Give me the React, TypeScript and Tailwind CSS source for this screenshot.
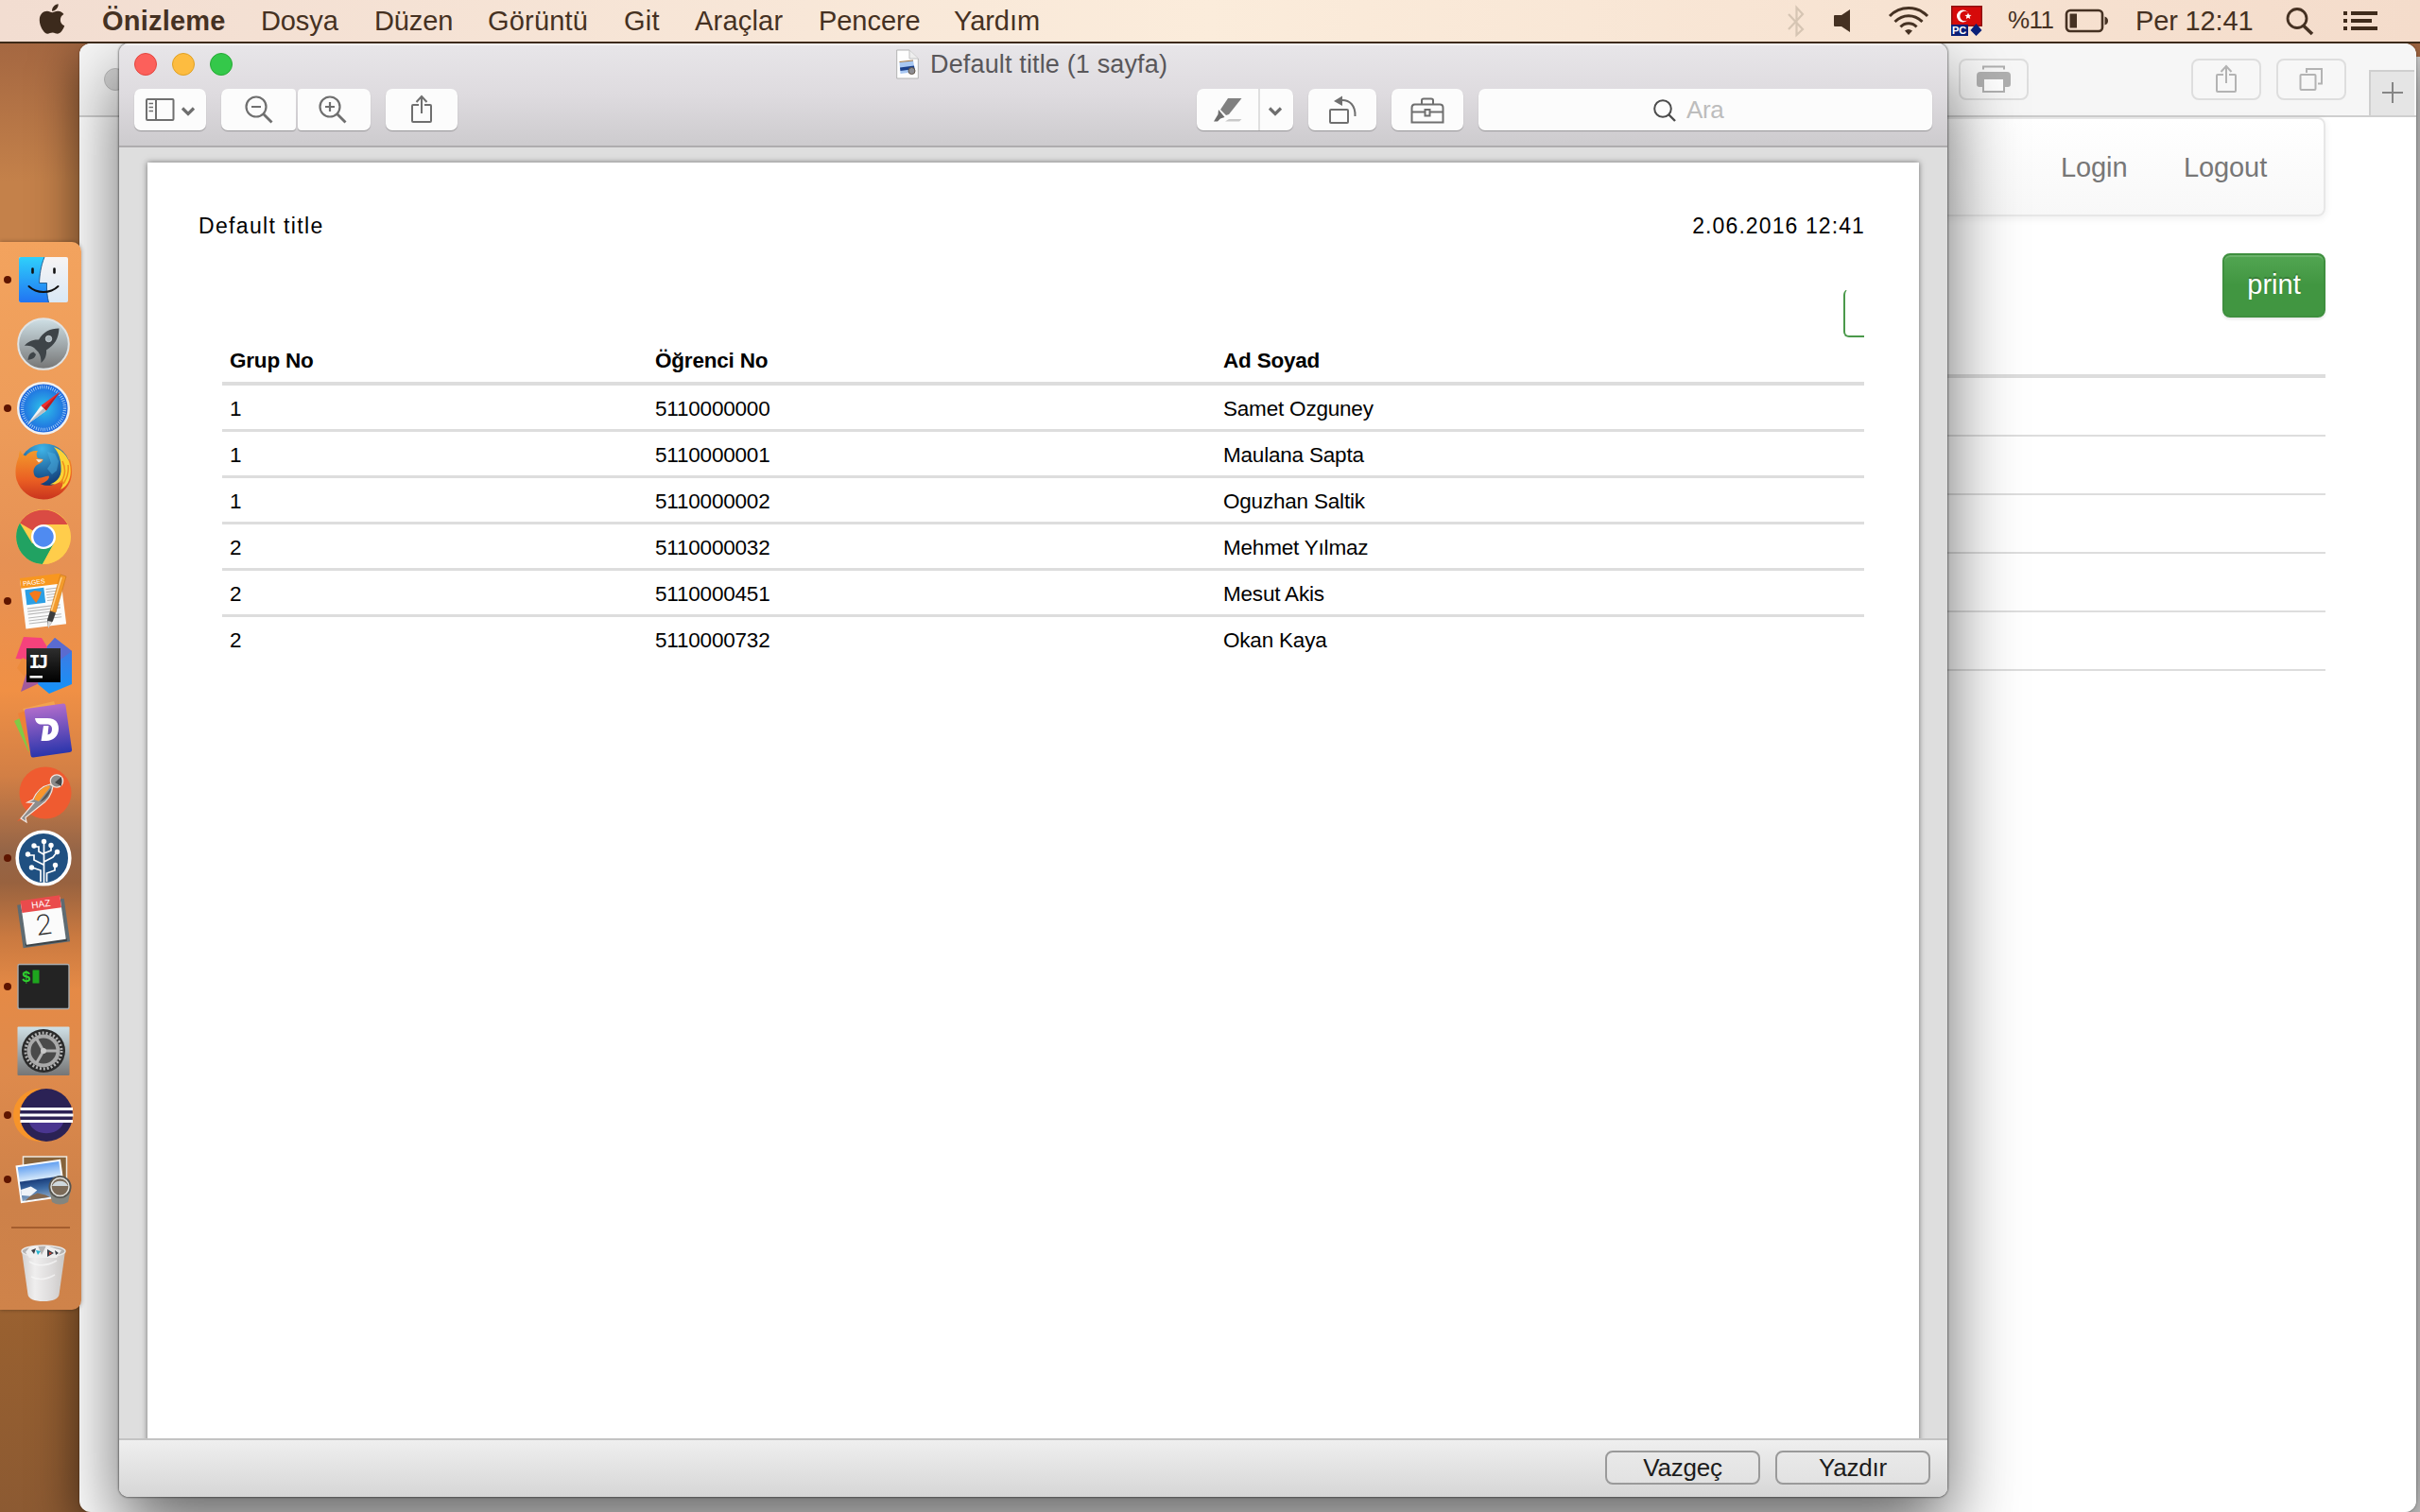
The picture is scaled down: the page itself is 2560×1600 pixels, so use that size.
import type { ReactNode } from "react";
import { FaApple } from "react-icons/fa";

const students = [
  ["1", "5110000000", "Samet Ozguney"],
  ["1", "5110000001", "Maulana Sapta"],
  ["1", "5110000002", "Oguzhan Saltik"],
  ["2", "5110000032", "Mehmet Yılmaz"],
  ["2", "5110000451", "Mesut Akis"],
  ["2", "5110000732", "Okan Kaya"],
];

const menus = [
  { label: "Önizleme", cls: "w-[168px] font-bold tracking-[0.2px]" },
  { label: "Dosya", cls: "w-[120px] tracking-[-0.1px]" },
  { label: "Düzen", cls: "w-[120px] tracking-[-0.1px]" },
  { label: "Görüntü", cls: "w-[144px] tracking-[0.2px]" },
  { label: "Git", cls: "w-[75px] tracking-[0.3px]" },
  { label: "Araçlar", cls: "w-[131px] tracking-[0.2px]" },
  { label: "Pencere", cls: "w-[143px] tracking-[-0.05px]" },
  { label: "Yardım", cls: "w-[110px] tracking-[-0.05px]" },
];

function MenuBar() {
  return (
    <header className="relative flex h-[46px] items-start border-b-2 border-[#3d2a18] bg-linear-to-r from-[#f2ddd1] via-[#fbecdb] to-[#f4dccb] text-[29px] leading-[44px] text-[#453122]">
      <FaApple className="ml-[38px] mt-[2px] h-[36px] w-[34px] shrink-0 text-[#3c2a1c]" />
      <nav className="ml-[36px] flex w-[1781px] shrink-0 whitespace-nowrap">
        {menus.map((m) => (
          <span key={m.label} className={"shrink-0 " + m.cls}>{m.label}</span>
        ))}
      </nav>
      <svg className="-ml-[4px] mt-[5px] h-[36px] w-[30px] shrink-0" viewBox="0 0 30 36" fill="none" stroke="#d6c5b3" strokeWidth="2.2">
        <path d="M7 10 L22 26 L15.5 32 V3 L22 10 L7 26" />
      </svg>
      <svg className="ml-[24px] mt-[9px] h-[26px] w-[22px] shrink-0" viewBox="0 0 22 26" fill="#453122">
        <path d="M2 7 h7 L18 1 V25 L9 19 H2 Q1 19 1 18 V8 Q1 7 2 7Z" />
      </svg>
      <svg className="ml-[35px] mt-[5px] h-[34px] w-[46px] shrink-0" viewBox="0 0 46 34" fill="none" stroke="#453122" strokeWidth="3">
        <path d="M3 12 C14 .7 32 .7 43 12" />
        <path d="M8.500 18 C17 9.500 29 9.500 37.500 18" />
        <path d="M14.500 23.500 C19 18.500 27 18.500 31.500 23.500" />
        <path d="M19 27.500 Q23 24.500 27 27.500 L23 32Z" fill="#453122" stroke="none" />
      </svg>
      <svg className="ml-[22px] mt-[6px] h-[32px] w-[33px] shrink-0" viewBox="0 0 33 32">
        <rect width="33" height="22" fill="#d60a0a" />
        <rect x=".75" y=".75" width="31.500" height="20.500" fill="none" stroke="#8f1010" strokeWidth="1.500" />
        <circle cx="12.500" cy="11" r="6.500" fill="#fff" />
        <circle cx="14.500" cy="11" r="5.200" fill="#d60a0a" />
        <path d="M18 7.500 l1 2.200 2.500 .2 -1.900 1.600 .6 2.500 -2.200 -1.300 -2.200 1.300 .6 -2.500 -1.900 -1.600 2.500 -.2z" fill="#fff" />
        <rect y="20" width="18" height="12" fill="#0a1f78" />
        <text x="1" y="30" fill="#fff" fontSize="11" fontWeight="700" fontFamily="Liberation Sans, sans-serif">PC</text>
        <path d="M26.500 19 l6 7 -6 6 -6 -6z" fill="#0a1f78" />
      </svg>
      <span className="ml-[27px] w-[60px] shrink-0 whitespace-nowrap text-[26px] leading-[43px] tracking-[-0.6px]">%11</span>
      <svg className="mt-[9px] h-[26px] w-[48px] shrink-0" viewBox="0 0 48 26">
        <rect x="2" y="2" width="38" height="22" rx="4" fill="none" stroke="#453122" strokeWidth="2.600" />
        <rect x="5.500" y="5.500" width="7.500" height="15" fill="#453122" />
        <path d="M42.500 8.500 Q46 9.500 46 13 Q46 16.500 42.500 17.500Z" fill="#453122" />
      </svg>
      <span className="ml-[27px] w-[158px] shrink-0 whitespace-nowrap tracking-[-0.15px]">Per 12:41</span>
      <svg className="mt-[7px] h-[32px] w-[32px] shrink-0" viewBox="0 0 32 32" fill="none" stroke="#453122" strokeWidth="2.800">
        <circle cx="13" cy="12.500" r="10" />
        <path d="M19.500 20 L29 29" strokeWidth="3.600" />
      </svg>
      <svg className="ml-[29px] mt-[12px] h-[20px] w-[38px] shrink-0" viewBox="0 0 38 20" fill="#3f2b1b">
        <path d="M1 0h4v4h-4zM1 8h4v4h-4zM1 16h4v4h-4zM9 0h28v4h-28zM9 8h22v4h-22zM9 16h28v4h-28z" />
      </svg>
    </header>
  );
}

function ShareIcon({ cls }: { cls: string }) {
  return (
    <svg className={"h-[32px] w-[24px] " + cls} viewBox="0 0 24 32" fill="none" stroke="currentColor" strokeWidth="2">
      <path d="M9 11 H3 Q2 11 2 12 V28 Q2 29 3 29 H21 Q22 29 22 28 V12 Q22 11 21 11 H15" />
      <path d="M12 20 V2 M6.500 8 L12 2 L17.500 8" />
    </svg>
  );
}

function SafariWindow() {
  const btn = "flex h-[44px] items-center justify-center rounded-[8px] border-2 border-[#dedede] bg-[#f7f7f7]";
  return (
    <section className="absolute left-[84px] top-[46px] h-[1554px] w-[2472px] overflow-hidden rounded-[12px] bg-white">
      <div className="flex h-[78px] items-start border-b-2 border-[#cfcfcf] bg-[#f6f6f6]">
        <div className="ml-[26px] mt-[26px] h-[24px] w-[24px] rounded-full border border-[#bbb] bg-[#d4d4d4]" />
        <div className={"ml-[1938px] mt-[16px] w-[74px] " + btn}>
          <svg className="h-[30px] w-[36px]" viewBox="0 0 36 30">
            <path d="M7 4.500 V1.500 H29 V4.500" fill="none" stroke="#b0b0b0" strokeWidth="2" />
            <path d="M4 7 H32 Q36 7 36 11 V20 Q36 23 33 23 H30 V15 H6 V23 H3 Q0 23 0 20 V11 Q0 7 4 7Z" fill="#b0b0b0" />
            <path d="M7 15 V28 H29 V15" fill="#fff" stroke="#b0b0b0" strokeWidth="2" />
          </svg>
        </div>
        <div className={"ml-[172px] mt-[16px] w-[74px] " + btn}><ShareIcon cls="text-[#b3b3b3]" /></div>
        <div className={"ml-[16px] mt-[16px] w-[74px] " + btn}>
          <svg className="h-[26px] w-[26px]" viewBox="0 0 26 26" fill="none" stroke="#b3b3b3" strokeWidth="2">
            <rect x="1.500" y="8" width="16" height="16" rx="1" />
            <path d="M8 6 V2 H24 V17.500 H20" />
          </svg>
        </div>
        <div className="ml-[24px] mt-[28px] flex h-[48px] w-[48px] items-center justify-center border-l-2 border-t-2 border-[#cfcfcf] bg-[#e5e5e5] pb-[2px]">
          <svg className="h-[22px] w-[22px]" viewBox="0 0 22 22" stroke="#858585" strokeWidth="2"><path d="M11 0V22M0 11H22" /></svg>
        </div>
      </div>
      <div className="ml-[96px] flex w-[2280px] flex-col items-end">
        <div className="flex h-[105px] w-full items-center rounded-[8px] border-2 border-[#e7e7e7] bg-linear-to-b from-white to-[#f8f8f8] pl-[1998px] text-[29px] leading-[32px] tracking-[-0.1px] text-[#777] shadow-[0_2px_8px_rgba(0,0,0,0.07)]">
          <span className="w-[130px]">Login</span>
          <span>Logout</span>
        </div>
        <div className="mt-[39px] flex h-[68px] w-[109px] items-center justify-center rounded-[8px] border-2 border-[#3e8f3e] bg-linear-to-b from-[#52a652] to-[#419641] to-50% text-[29px] tracking-[0px] text-white shadow-[inset_0_2px_0_rgba(255,255,255,0.15),0_2px_3px_rgba(0,0,0,0.1)] [text-shadow:0_-2px_1px_rgba(0,0,0,0.2)]">print</div>
        <div className="mt-[60px] h-[4px] w-full bg-[#ddd]" />
        {[0, 1, 2, 3, 4].map((i) => (
          <div key={i} className="h-[62px] w-full border-b-2 border-[#ddd]" />
        ))}
      </div>
    </section>
  );
}

const tool = "flex h-[44px] shrink-0 items-center bg-[#fcfcfc] text-[#6f6f6f] shadow-[0_1px_1px_rgba(0,0,0,0.28)]";

function Zoomer({ plus }: { plus?: boolean }) {
  return (
    <svg className="h-[30px] w-[30px]" viewBox="0 0 30 30" fill="none" stroke="currentColor" strokeWidth="2.200">
      <circle cx="12" cy="12" r="10.500" />
      <path d={plus ? "M7 12H17M12 7V17" : "M7 12H17"} />
      <path d="M19.500 19.500 L28.500 28.500" strokeWidth="2.800" />
    </svg>
  );
}

function Chevron({ cls }: { cls: string }) {
  return (
    <svg className={"h-[10px] w-[16px] " + cls} viewBox="0 0 16 10" fill="none" stroke="currentColor" strokeWidth="3.200">
      <path d="M2 1.500 L8 7.500 L14 1.500" />
    </svg>
  );
}

function PreviewToolbar() {
  return (
    <div className="h-[110px] border-b-2 border-[#aeacae] bg-linear-to-b from-[#e8e6e9] via-[#dedbdf] to-[#cdcbce] shadow-[inset_0_2px_0_#f3f2f4]">
      <div className="flex h-[44px] items-center pl-[16px]">
        <div className="flex gap-[16px]">
          <i className="h-[24px] w-[24px] rounded-full border border-[#e2463f] bg-[#fc605b]" />
          <i className="h-[24px] w-[24px] rounded-full border border-[#dfa023] bg-[#fdbc40]" />
          <i className="h-[24px] w-[24px] rounded-full border border-[#27aa35] bg-[#34c84a]" />
        </div>
        <svg className="ml-[702px] h-[32px] w-[24px]" viewBox="0 0 24 32">
          <path d="M.7 1 H14 L23.300 10 V31 H.7Z" fill="#fefefe" stroke="#b2b2b2" />
          <path d="M14 1 V10 H23.300" fill="#eee" stroke="#c0c0c0" />
          <path d="M3.500 14 L18 12 L20 24 L4.500 26Z" fill="#a9c8f2" />
          <path d="M4 19.500 L19 17.500 L19.500 21 L4.500 23Z" fill="#1c418c" />
          <path d="M3.500 13.500 L18 12" stroke="#a2743c" />
          <circle cx="16.500" cy="23" r="3.500" fill="#8d8d92" stroke="#605548" />
        </svg>
        <span className="ml-[12px] whitespace-nowrap text-[27px] leading-[46px] tracking-[0.15px] text-[#59575a]">Default title (1 sayfa)</span>
      </div>
      <div className="mt-[4px] flex pl-[16px]">
        <div className={"w-[76px] rounded-[7px] pl-[12px] " + tool}>
          <svg className="h-[24px] w-[31px]" viewBox="0 0 31 24" fill="none" stroke="currentColor" strokeWidth="2">
            <rect x="1" y="1" width="28.500" height="22" rx="1" />
            <path d="M11 1V23" />
            <path d="M3.500 5.500H8M3.500 9.500H8M3.500 13.500H8" strokeWidth="1.600" />
          </svg>
          <Chevron cls="ml-[6px] mt-[3px]" />
        </div>
        <div className={"ml-[16px] w-[79px] justify-center rounded-l-[7px] rounded-r-[4px] " + tool}><Zoomer /></div>
        <div className={"ml-[2px] w-[77px] rounded-l-[4px] rounded-r-[7px] pl-[22px] " + tool}><Zoomer plus /></div>
        <div className={"ml-[16px] w-[76px] justify-center rounded-[7px] " + tool}><ShareIcon cls="" /></div>
        <div className={"ml-[782px] w-[102px] rounded-[7px] pl-[18px] " + tool}>
          <svg className="h-[26px] w-[31px]" viewBox="0 0 31 26">
            <path d="M15 1 H29.500 L16 18 L13 19 L7 13Z" fill="#808080" />
            <path d="M5 13 L11.500 21 L7 22.500 L4 25.500 H0 L4.500 18Z" fill="#6c6c6c" />
            <path d="M12 25.500 L16 23 H29.500 L27 25.500Z" fill="#c9c9c9" />
          </svg>
          <div className="ml-[16px] h-[44px] w-[2px] bg-[#dfdfdf]" />
          <Chevron cls="ml-[8px] mt-[3px]" />
        </div>
        <div className={"ml-[16px] w-[72px] justify-center rounded-[7px] " + tool}>
          <svg className="h-[32px] w-[32px]" viewBox="0 0 32 32" fill="none" stroke="currentColor" strokeWidth="2">
            <rect x="3" y="16" width="19" height="14" rx="1" />
            <path d="M14 6 C24 5 30 12 29.500 23" />
            <path d="M7 7 L16 1.500 V12Z" fill="currentColor" stroke="none" />
          </svg>
        </div>
        <div className={"ml-[16px] w-[76px] justify-center rounded-[7px] " + tool}>
          <svg className="mt-[1px] h-[28px] w-[36px]" viewBox="0 0 36 28" fill="none" stroke="currentColor" strokeWidth="2">
            <path d="M1.500 26.500 V11 Q1.500 7.500 4.500 7.500 H31.500 Q34.500 7.500 34.500 11 V26.500Z" />
            <path d="M12 7.500 V3 Q12 1.500 14 1.500 H22 Q24 1.500 24 3 V7.500" />
            <path d="M1.500 15.500H15.500M20.500 15.500H34.500" />
            <rect x="15.500" y="13" width="5" height="6.500" />
          </svg>
        </div>
        <div className={"ml-[16px] w-[480px] rounded-[7px] pl-[185px] " + tool}>
          <svg className="mt-[2px] h-[24px] w-[24px]" viewBox="0 0 24 24" fill="none" stroke="#4c4c4c" strokeWidth="2">
            <circle cx="10" cy="10" r="8.800" />
            <path d="M16.500 16.500 L23 23" strokeWidth="2.400" />
          </svg>
          <span className="ml-[11px] text-[26px] leading-[46px] tracking-[-0.4px] text-[#bdbdbd]">Ara</span>
        </div>
      </div>
    </div>
  );
}

function PreviewWindow() {
  const cols = "grid grid-cols-[450px_601px_1fr] pl-[8px]";
  return (
    <section className="absolute left-[126px] top-[46px] flex h-[1538px] w-[1934px] flex-col overflow-hidden rounded-[10px] bg-[#dedede]">
      <PreviewToolbar />
      <div className="h-[1366px] overflow-hidden px-[30px] pt-[16px]">
        <article className="h-[1360px] bg-white pl-[54px] pr-[58px] pt-[55px] text-[22.5px] leading-[24px] text-black shadow-[0_0_6px_rgba(0,0,0,0.5)]">
          <div className="flex justify-between text-[23px] tracking-[1.35px]">
            <span>Default title</span>
            <span className="-mr-[1px] tracking-[1.1px]">2.06.2016 12:41</span>
          </div>
          <div className="mt-[55px] flex justify-end">
            <div className="h-[51px] w-[22px] rounded-l-[6px] border-b-2 border-l-2 border-[#4a994a] [clip-path:inset(1px_0_0_0)]" />
          </div>
          <div className="ml-[25px] tracking-[-0.2px]">
            <div className={"h-[51px] border-b-4 border-[#ddd] pt-[13px] font-bold " + cols}>
              <span>Grup No</span>
              <span>Öğrenci No</span>
              <span>Ad Soyad</span>
            </div>
            {students.map((s) => (
              <div key={s[1]} className={"h-[49px] border-b-3 border-[#ddd] pt-[13px] last:border-b-0 " + cols}>
                <span>{s[0]}</span>
                <span>{s[1]}</span>
                <span>{s[2]}</span>
              </div>
            ))}
          </div>
        </article>
      </div>
      <footer className="flex h-[62px] justify-end gap-[16px] border-t-2 border-[#c3c3c3] bg-linear-to-b from-[#efefef] to-[#d6d6d6] pr-[18px] pt-[11px] text-[26px] leading-[32px] text-[#1c1c1c]">
        {["Vazgeç", "Yazdır"].map((t) => (
          <button key={t} className="h-[36px] w-[164px] rounded-[8px] border-2 border-[#9a9a9a] bg-linear-to-b from-[#e9e9e9] to-[#e2e2e2] tracking-[-0.2px]">{t}</button>
        ))}
      </footer>
    </section>
  );
}

function Slot({ running, children }: { running?: boolean; children: ReactNode }) {
  return (
    <svg className="block h-[68px] w-[86px] overflow-visible" viewBox="0 0 86 68">
      {running && <circle cx="8" cy="34" r="4" fill="#5e1500" />}
      {children}
    </svg>
  );
}

function Dock() {
  return (
    <aside className="absolute left-0 top-[256px] h-[1130px] w-[86px] rounded-r-[10px] bg-[linear-gradient(180deg,#f3a35e_0%,#ee9d5a_15%,#e69154_30%,#f09045_42%,#d27f45_50%,#956547_57%,#98623f_60%,#c97940_65%,#e58a46_70%,#de8a4c_78%,#cd8149_90%,#cf834a_100%)] pt-[6px] shadow-[0_0_4px_rgba(0,0,0,0.35)]">
      <svg className="absolute h-0 w-0">
        <defs>
          <linearGradient id="finder" x1="0" x2="0" y1="0" y2="1"><stop stopColor="#2fd0fb" /><stop offset="1" stopColor="#2174f2" /></linearGradient>
          <linearGradient id="finderR" x1="0" x2="0" y1="0" y2="1"><stop stopColor="#f7f4f4" /><stop offset="1" stopColor="#d9e8f6" /></linearGradient>
          <linearGradient id="steel" x1="0" x2="0" y1="0" y2="1"><stop stopColor="#cfe0e6" /><stop offset="1" stopColor="#757575" /></linearGradient>
          <radialGradient id="compass"><stop stopColor="#2fc3ea" /><stop offset="1" stopColor="#1d62de" /></radialGradient>
          <linearGradient id="fox" x1="0" x2="0" y1="0" y2="1"><stop stopColor="#f39a2c" /><stop offset=".6" stopColor="#ea5f23" /><stop offset="1" stopColor="#c9331d" /></linearGradient>
          <radialGradient id="globe" cx=".45" cy=".1" r=".8"><stop stopColor="#3fb4e8" /><stop offset="1" stopColor="#0b2a66" /></radialGradient>
          <linearGradient id="ijp" x1="0" x2="0" y1="0" y2="1"><stop stopColor="#4973de" /><stop offset="1" stopColor="#1493f9" /></linearGradient>
          <linearGradient id="ijb" x1="0" x2="0" y1="0" y2="1"><stop stopColor="#2e2e2e" /><stop offset="1" stopColor="#000" /></linearGradient>
          <linearGradient id="dash" x1="0" x2="0" y1="0" y2="1"><stop stopColor="#b06ccb" /><stop offset="1" stopColor="#2a35ac" /></linearGradient>
          <linearGradient id="sea" x1="0" x2="0" y1="0" y2="1"><stop stopColor="#5e9df0" /><stop offset=".42" stopColor="#d3e7fa" /><stop offset=".45" stopColor="#1b3f7c" /><stop offset=".7" stopColor="#3d6ca6" /><stop offset="1" stopColor="#8fa9c4" /></linearGradient>
          <linearGradient id="bin" x1="0" x2="1" y1="0" y2="0"><stop stopColor="#d2d0cf" /><stop offset=".3" stopColor="#efeeee" /><stop offset=".7" stopColor="#dcdada" /><stop offset="1" stopColor="#c9c6c4" /></linearGradient>
        </defs>
      </svg>
      {/* Finder */}
      <Slot running>
        <rect x="20" y="10" width="52" height="48" rx="2" fill="url(#finderR)" />
        <path d="M22 10 H47 C43 20 42 29 41.500 37.500 H49.500 C49.200 45 50 52 51.500 58 H22 Q20 58 20 56 V12 Q20 10 22 10Z" fill="url(#finder)" />
        <path d="M47 10 C43 20 42 29 41.500 37.500 H49.500 C49.200 45 50 52 51.500 58" fill="none" stroke="#12477c" strokeWidth=".8" />
        <path d="M34.500 22.500V26.500M57.500 22.500V26.500" stroke="#111" strokeWidth="2.600" strokeLinecap="round" />
        <path d="M30.500 41 C39 49 53 49 61.500 41" fill="none" stroke="#111" strokeWidth="2" strokeLinecap="round" />
      </Slot>
      {/* Launchpad */}
      <Slot>
        <circle cx="46" cy="34" r="26.800" fill="url(#steel)" stroke="#dfe3e5" strokeWidth="2" />
        <path d="M62.500 17.500 C53 17.500 46 21 41 29.500 C35 29 29 31.500 26 36 C30 35.500 33 36 36 38 L40.500 42.500 C43 46 43.500 50 43.500 54 C48 50.500 49.500 45 49 40.500 C58 35 62 28 62.500 17.500Z" fill="#3e4448" />
        <path d="M35.500 42.500 C31 43.500 30 47 29.500 51 C34 50 37 49 38 45Z" fill="#3e4448" />
        <circle cx="51.500" cy="28.500" r="3.200" fill="#a9b5ba" stroke="#d5dcdf" strokeWidth=".8" />
      </Slot>
      {/* Safari */}
      <Slot running>
        <circle cx="46" cy="34" r="26.800" fill="url(#compass)" stroke="#f1f1f1" strokeWidth="2.400" />
        <circle cx="46" cy="34" r="22.500" fill="none" stroke="#bfe2fa" strokeWidth="3.400" strokeDasharray=".7 1.656" />
        <path d="M63.500 16.500 L43.300 31.300 L48.700 36.700Z" fill="#ef2c2c" />
        <path d="M63.500 16.500 L48.700 36.700 L46 34Z" fill="#b81e22" />
        <path d="M29 51 L43.300 31.300 L48.700 36.700Z" fill="#f4f4f4" />
        <path d="M29 51 L48.700 36.700 L46 34Z" fill="#b9bdc2" />
      </Slot>
      {/* Firefox */}
      <Slot>
        <circle cx="47" cy="31" r="27.500" fill="url(#globe)" />
        <path d="M50 12 L58 14 L62 22 L60 32 L55 36 L50 30 L54 24Z" fill="#4fb6e6" opacity=".45" />
        <path d="M21.500 10.500 C22 13 24 15.500 27 16.500 C31 12 35 10.500 40 11 C38 14 38.500 17 40 19 L45.500 20 C45.500 23 42 24.500 39 26 C35 29 34.500 34 37 38 C41 42 46 38 51.500 37.500 C53.500 40 48 45 42.500 46 C51 50 60 47 64 41 C67 36 68 30 66 24 L74 20 C77 29 76.500 38 74 44 C69 55 58 62.500 46 62.500 C30 62.500 16.500 50 16.500 34 C16.500 26 18.500 21 20 17 C20 14.500 20.500 12 21.500 10.500Z" fill="url(#fox)" />
        <path d="M57 7 C69 11 76 22 74.500 36 C73.500 44 70 49 64 52 C67 47 67 44 66 41 C62 46 58 47 53 46.500 C60 44 64 39 64.500 33 C65 22 63 14 57 7Z" fill="#fbd336" />
        <path d="M66 22 C70 30 69 38 64 45 M72 26 C73 33 71 40 67 46" fill="none" stroke="#f08c1c" strokeWidth="1.500" />
        <path d="M38 20 L45.500 20.500 L41 23.500Z" fill="#f6e4cd" />
      </Slot>
      {/* Chrome */}
      <Slot>
        <circle cx="46" cy="34" r="29" fill="#ffcd4b" />
        <path d="M46 34 L21 19.500 A29 29 0 0 1 71.500 21 H46Z" fill="#da4b43" />
        <path d="M21 19.500 A29 29 0 0 0 45 63 L57 41 L46 34 L34 41Z" fill="#21a262" />
        <path d="M57 41 L45 63 A29 29 0 0 0 71.500 21 H46Z" fill="#ffcd4b" />
        <circle cx="46" cy="34" r="13" fill="#fff" />
        <circle cx="46" cy="34" r="10.700" fill="#4f8bf1" />
      </Slot>
      {/* Pages */}
      <Slot running>
        <g transform="rotate(-7 46 34)">
          <rect x="24" y="9" width="43" height="52" fill="#fbfbfb" />
          <rect x="24" y="7" width="43" height="11" fill="#f8971f" />
          <text x="26.500" y="15.500" fontSize="7" fill="#fff" fontFamily="Liberation Sans, sans-serif">PAGES</text>
          <rect x="28" y="20" width="20" height="16" fill="#2b9fe4" />
          <path d="M32 24 L38 22 L45 24 L42 30 L38 35 L35 30Z" fill="#f47a1c" />
          <path d="M50 22H63M50 25H63M50 28H63M50 31H63M50 34H63M28 40H63M28 43H63M28 46H58M28 50H63M28 53H63M28 56H50" stroke="#b9b9b9" strokeWidth="1.100" />
        </g>
        <path d="M64 6 L70 8 L59 46 L53 45Z" fill="#f39b2c" stroke="#c87414" strokeWidth=".6" />
        <path d="M65 9 L54.500 44" stroke="#ffd28c" strokeWidth="1.500" />
        <path d="M53 44.500 L59 46.500 L56 55 L51 62 L50 54Z" fill="#3c3c3c" />
        <path d="M50.500 55 L55 56 L51 63Z" fill="#d8d8d8" />
      </Slot>
      {/* IntelliJ IDEA */}
      <Slot>
        <g transform="translate(0 -4)">
          <path d="M25 8 L44 9 L52 22 L30 32 L16.500 31Z" fill="#f6427c" />
          <path d="M24 30 L18 41 L28 52 L40 40Z" fill="#ec8b3c" />
          <path d="M30 40 L22 66 L48 54Z" fill="#a05a9c" />
          <path d="M58 9 L76 23 V58 L52 68 L40 58 L50 18Z" fill="url(#ijp)" />
          <path d="M58 9 L76 23 L64 32 L50 18Z" fill="#5a6bd0" />
          <rect x="28" y="20" width="36" height="36" fill="url(#ijb)" />
          <text x="30.500" y="40.500" fontSize="20" fontWeight="700" fill="#fff" fontFamily="DejaVu Sans Mono, monospace" textLength="21">IJ</text>
          <rect x="31.500" y="49" width="13.500" height="2.500" fill="#fff" />
        </g>
      </Slot>
      {/* Dash */}
      <Slot>
        <path d="M15 25 L21 22 L34 60 L30 57Z" fill="#7fcb45" />
        <path d="M19 17 L27 14 L36 62 L31 58Z" fill="#ee8138" />
        <path d="M24 12 L57 4 L60 12 L28 18Z" fill="#f3a34e" />
        <rect x="29" y="9" width="44" height="52" rx="2.500" fill="url(#dash)" transform="rotate(-8 51 35)" />
        <path d="M37 22 H50 C58 22 62 26 62 33 C62 41 56 46 49 46 H43.500 L46 30 H51.500 L50.500 39.500 C53.500 39 55 36.500 55 33.500 C55 30 53 28.500 49.500 28.500 H43 C40 28.500 37.500 26 37 22Z" fill="#fff" />
      </Slot>
      {/* Postman */}
      <Slot>
        <circle cx="48" cy="33" r="27.500" fill="#ef5b30" />
        <path d="M18 63 L26 56 L28 60Z" fill="#ef5b30" />
        <circle cx="60" cy="20.500" r="6.700" fill="#8b8b8b" stroke="#f2e6df" strokeWidth="1.200" />
        <path d="M58 22 L65 16 V26Z" fill="#444" />
        <path d="M53 24 C44 26 38 33 35 40 L29 43 L36 43.500 L22 60 L28 64 L27 59 L42 47 C50 42 55 34 56 26Z" fill="#8d8d8d" stroke="#f2e6df" strokeWidth="1.200" />
        <path d="M52 25 C44 27 38 34 36 40 L41 42 L53 27Z" fill="#f9962c" />
        <path d="M54 28 L42 43 C49 40 53 34 54 28Z" fill="#555" />
      </Slot>
      {/* SourceTree */}
      <Slot running>
        <circle cx="46" cy="34" r="27.800" fill="#205081" stroke="#fff" strokeWidth="3.600" />
        <path d="M46.500 18 V60 M43 59 V47 L34 44 M49.500 59 V50 L58 47 V42 M46 41 L36 36 V31 H30 M46.500 38 L56 33 L60 28 M46 30 L41 27 V22 H36 M46.500 29 L54 26 V21" fill="none" stroke="#fff" strokeWidth="1.700" />
        <g fill="#fff">
          <circle cx="46.500" cy="16.500" r="2.700" /><circle cx="36" cy="21" r="2.700" /><circle cx="54" cy="20.500" r="2.700" />
          <circle cx="29.500" cy="30" r="2.700" /><circle cx="60.500" cy="27.500" r="2.700" /><circle cx="33.500" cy="44" r="2.700" /><circle cx="58.500" cy="41.500" r="2.700" />
        </g>
      </Slot>
      {/* Calendar */}
      <Slot>
        <g transform="rotate(-8 46 34)">
          <rect x="21" y="12" width="50" height="46" fill="#5f6b72" />
          <rect x="24" y="54" width="44" height="3" fill="#3b4348" />
          <rect x="25" y="10" width="42" height="45" fill="#fbfbfb" />
          <rect x="25" y="8" width="42" height="13" fill="#ea4b4c" />
          <text x="46" y="18" fontSize="10" textAnchor="middle" fill="#fff" fontFamily="Liberation Sans, sans-serif">HAZ</text>
          <text x="46" y="47" fontSize="30" textAnchor="middle" fill="#2a2a2a" fontWeight="300" fontFamily="Lato, sans-serif">2</text>
        </g>
      </Slot>
      {/* Terminal */}
      <Slot running>
        <rect x="19" y="10.500" width="54" height="47" rx="1.500" fill="#232323" stroke="#aaa" strokeWidth="1.400" />
        <text x="23" y="29" fontSize="16" fontWeight="700" fill="#2fd12f" fontFamily="Liberation Mono, monospace">$</text>
        <rect x="34.500" y="16.500" width="7" height="14" fill="#1ea51e" />
      </Slot>
      {/* System preferences */}
      <Slot>
        <rect x="18.500" y="8.500" width="55" height="51.500" rx="1" fill="url(#steel)" />
        <circle cx="46" cy="34" r="23" fill="#2a2a2a" />
        <circle cx="46" cy="34" r="19" fill="none" stroke="#b4b4b4" strokeWidth="3" strokeDasharray="2 1.980" />
        <circle cx="46" cy="34" r="15.500" fill="#4a4a4a" stroke="#a9a9a9" strokeWidth="4" />
        <path d="M46 34 H61 M46 34 L38.500 21 M46 34 L38.500 47" stroke="#b0b0b0" strokeWidth="3" />
        <circle cx="46" cy="34" r="3" fill="#c9c9c9" />
      </Slot>
      {/* Eclipse */}
      <Slot running>
        <circle cx="42" cy="34" r="28" fill="#f7942a" />
        <circle cx="49" cy="34" r="28" fill="#2b2255" />
        <path d="M31 42 C36 57 62 57 67 42Z" fill="#4a3690" />
        <path d="M21.500 27.500H77M21 34H77.500M21.500 40.500H77" stroke="#fff" strokeWidth="3.200" />
      </Slot>
      {/* Preview */}
      <Slot running>
        <rect x="24.500" y="10" width="46" height="40" fill="#86633a" stroke="#efe9df" strokeWidth="1.500" />
        <g transform="rotate(-8 43 36)">
          <rect x="20" y="17" width="46" height="38" fill="url(#sea)" stroke="#fbfbfb" strokeWidth="2" />
          <path d="M21 42 L32 40 L38 45 L30 50 L21 48Z" fill="#eef3f8" />
          <path d="M24 54 L30 50 L38 48 L46 51 L50 54Z" fill="#85684f" />
        </g>
        <path d="M52 45 H75 L72 58 Q63 63 55 58Z" fill="#83857f" />
        <circle cx="63.500" cy="42" r="11" fill="#7b6a58" stroke="#55544f" strokeWidth="2" />
        <circle cx="63.500" cy="42" r="9.500" fill="none" stroke="#dfdfdb" strokeWidth="1.500" />
        <path d="M55 41 C58 34 69 34 72 41Z" fill="#cfd8dd" />
      </Slot>
      <div className="ml-[12px] mt-[16px] h-[2px] w-[62px] bg-[#a45d2e]" />
      {/* Trash */}
      <svg className="block h-[68px] w-[86px] overflow-visible" viewBox="0 1299 86 68">
        <path d="M23 1323 H69 L62.500 1369 Q61 1376 46 1376 Q31 1376 29.500 1369Z" fill="url(#bin)" />
        <ellipse cx="46" cy="1323" rx="23" ry="6" fill="#b5b3b2" stroke="#e8e7e6" strokeWidth="1.500" />
        <path d="M27 1324 L32 1318 L40 1317 L44 1327 L49 1317 L58 1320 L65 1322 L60 1330 H31Z" fill="#efefef" />
        <path d="M33 1322 L38 1320 L36 1326ZM50 1321 L57 1325 L50 1329ZM58 1322 L62 1325 L59 1327Z" fill="#3a3f47" />
        <path d="M38 1322 L43 1323 L40 1327Z" fill="#24b4cf" />
        <path d="M52 1324 L55 1325 L52 1327Z" fill="#dd4530" />
        <path d="M31 1334 Q44 1342 60 1333 M33 1350 Q44 1356 58 1348" fill="none" stroke="#f8f8f8" strokeWidth="1.500" opacity=".7" />
      </svg>
    </aside>
  );
}

export default function App() {
  return (
    <div className="relative h-[1600px] w-[2560px] overflow-hidden bg-[linear-gradient(180deg,#9c6240_0%,#a86a42_4%,#c4814a_12%,#c4814a_20%,#b0713c_70%,#986030_88%,#8c5a32_100%)] font-['Liberation_Sans',Arial,sans-serif]">
      <div className="absolute left-[2540px] top-[60px] h-[1540px] w-[20px] bg-[#dcdcdc]" />
      <div className="absolute left-[84px] top-[46px] h-[1554px] w-[2472px] rounded-[12px] shadow-[0_16px_50px_rgba(0,0,0,0.6),0_0_2px_rgba(0,0,0,0.5)]" />
      <SafariWindow />
      {/* The front window's shadow falls on the browser window only */}
      <div className="absolute left-[84px] top-[46px] h-[1554px] w-[2472px] overflow-hidden rounded-[12px]">
        <div className="absolute left-[42px] top-0 h-[1538px] w-[1934px] rounded-[10px] shadow-[0_36px_76px_rgba(0,0,0,0.6),0_0_2px_1px_rgba(0,0,0,0.4)]" />
      </div>
      <PreviewWindow />
      <Dock />
      <MenuBar />
    </div>
  );
}
